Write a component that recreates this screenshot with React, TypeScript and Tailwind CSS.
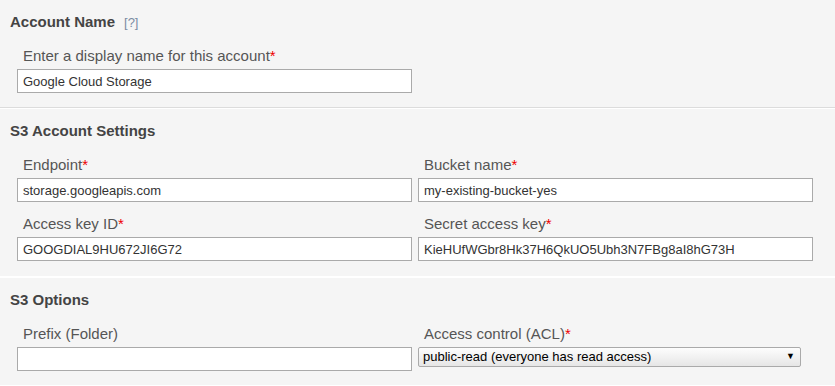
import React from 'react';

const font = { fontFamily: '"Liberation Sans", Arial, sans-serif' };

function Label({ text, required }: { text: string; required?: boolean }) {
  return (
    <div className="pl-[6px] text-[15px] leading-[20px] text-[#555] mb-[3px] whitespace-nowrap">
      {text}
      {required && <span className="text-[#e00]">*</span>}
    </div>
  );
}

function TextField({ label, value, required }: { label: string; value: string; required?: boolean }) {
  return (
    <div>
      <Label text={label} required={required} />
      <input
        readOnly
        value={value}
        className="block w-full h-[24px] border border-[#aaa] bg-white px-[5px] text-[13px] text-[#333] outline-none"
        style={font}
      />
    </div>
  );
}

function Section({
  title,
  help,
  first,
  last,
  children,
}: {
  title: string;
  help?: boolean;
  first?: boolean;
  last?: boolean;
  children: React.ReactNode;
}) {
  return (
    <div
      className={`${first ? 'pt-[12px]' : 'pt-[12px] border-t border-white'} ${
        last || first ? 'pb-[14px]' : 'pb-[15px]'
      } border-b border-[#dcdcdc]`}
    >
      <div className="pl-[10px] h-[20px] text-[15px] leading-[20px] font-bold text-[#444] mb-[14px] whitespace-nowrap">
        {title}
        {help && (
          <span className="ml-[9px] text-[13px] leading-[10px] font-normal text-[#7b8ba3]">[?]</span>
        )}
      </div>
      <div className="ml-[17px] w-[796px] grid grid-cols-2 gap-x-[6px] gap-y-[12px]">{children}</div>
    </div>
  );
}

export default function App() {
  return (
    <div className="w-[835px] h-[386px] bg-[#f5f5f5] overflow-hidden" style={font}>
      {/* Account Name */}
      <Section title="Account Name" help first>
        <TextField label="Enter a display name for this account" value="Google Cloud Storage" required />
      </Section>

      {/* S3 Account Settings */}
      <Section title="S3 Account Settings">
        <TextField label="Endpoint" value="storage.googleapis.com" required />
        <TextField label="Bucket name" value="my-existing-bucket-yes" required />
        <TextField label="Access key ID" value="GOOGDIAL9HU672JI6G72" required />
        <TextField label="Secret access key" value="KieHUfWGbr8Hk37H6QkUO5Ubh3N7FBg8aI8hG73H" required />
      </Section>

      {/* S3 Options */}
      <Section title="S3 Options" last>
        <TextField label="Prefix (Folder)" value="" />
        <div>
          <Label text="Access control (ACL)" required />
          <div className="relative w-[383px] mt-[1px]">
            <select
              className="block w-full h-[20px] appearance-none border border-[#aaa] rounded-[2px] bg-gradient-to-b from-[#fdfdfd] to-[#e6e6e6] pl-[4px] text-[13px] leading-[18px] text-black outline-none"
              style={font}
              defaultValue="public-read"
            >
              <option value="private">private (only you have access)</option>
              <option value="public-read">public-read (everyone has read access)</option>
            </select>
            <span className="pointer-events-none absolute right-[6px] top-[3px] text-[9px] leading-[12px] text-black">
              ▼
            </span>
          </div>
        </div>
      </Section>
    </div>
  );
}
